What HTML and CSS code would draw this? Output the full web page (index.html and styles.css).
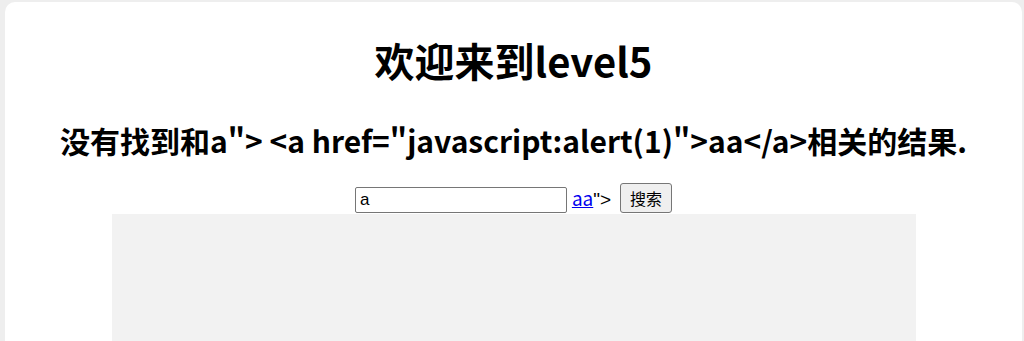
FILE: index.html
```html
<!DOCTYPE html>
<html lang="zh">
<head>
<meta charset="utf-8">
<title>level5</title>
<link rel="stylesheet" href="styles.css">
</head>
<body>
<div class="card">
  <h1 class="title">欢迎来到level5</h1>
  <h2 class="result">没有找到和a"&gt; &lt;a href="javascript:alert(1)"&gt;aa&lt;/a&gt;相关的结果.</h2>
  <form class="search">
    <input class="keyword" type="text" value="a"><span class="tail"><a class="inj" href="#">aa</a>"&gt;</span><button class="submit" type="button">搜索</button>
  </form>
  <div class="picture"></div>
</div>
</body>
</html>
```
FILE: styles.css
```css
html, body {
  margin: 0;
  padding: 0;
  background: #eeeeee;
  height: 100%;
  overflow: hidden;
}
.card {
  margin: 2px 2px 0 5px;
  background: #ffffff;
  border-radius: 10px;
  min-height: 400px;
  padding-top: 1px;
  text-align: center;
  font-family: "Noto Sans CJK SC", "Noto Sans", sans-serif;
  color: #000;
}
.title {
  font-size: 40px;
  font-weight: 700;
  margin: 29px 0 0;
  line-height: 56px;
}
.result {
  font-size: 30px;
  font-weight: 700;
  margin: 32px 0 0;
  line-height: 40px;
}
.search {
  margin: 23px 0 0;
  height: 30px;
  padding-bottom: 1px;
  display: flex;
  justify-content: center;
  align-items: flex-end;
}
.keyword {
  box-sizing: border-box;
  width: 212px;
  height: 26px;
  padding: 1px 4px;
  border: 1px solid #767676;
  border-radius: 2px;
  font-family: "Liberation Sans", Arial, sans-serif;
  font-size: 17px;
  margin: 0 5px 0 0;
}
.tail {
  font-family: "Liberation Sans", Arial, sans-serif;
  font-size: 19px;
  line-height: 26px;
  margin-right: 9px;
}
.inj {
  color: #0000ee;
  font-family: "Noto Sans CJK SC", sans-serif;
  font-size: 19px;
}
.submit {
  box-sizing: border-box;
  width: 52px;
  height: 30px;
  font-family: "Noto Sans CJK SC", sans-serif;
  font-size: 16px;
  padding: 0 4px;
  border: 1px solid #767676;
  border-radius: 3px;
  background: #efefef;
  color: #000;
}
.picture {
  width: 804px;
  height: 400px;
  margin: 0 auto;
  background: #f2f2f2;
}
```
